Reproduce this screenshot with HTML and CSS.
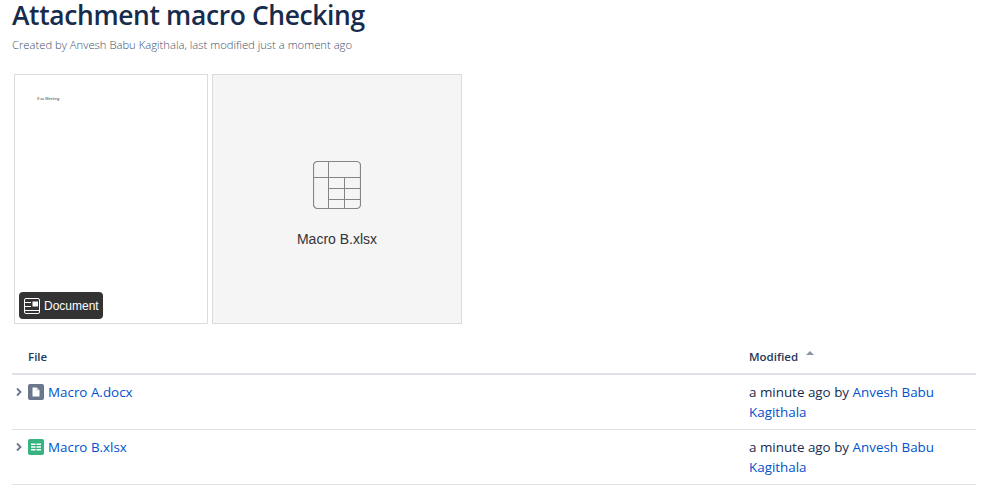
FILE: index.html
```html
<!DOCTYPE html>
<html lang="en">
<head>
    <meta charset="UTF-8">
    <title>Attachment macro Checking</title>
    <link rel="stylesheet" href="styles.css">
</head>
<body>
    <div class="page">
        <h1>Attachment macro Checking</h1>
        <p class="byline">Created by Anvesh Babu Kagithala, last modified just a moment ago</p>

        <div class="cards">
            <div class="card card-doc">
                <span class="doc-line">If so Meeting</span>
                <span class="badge">
                    <svg class="badge-icon" viewBox="0 0 16 16" width="16" height="16" fill="none" stroke="#fff" stroke-width="1">
                        <rect x="0.5" y="0.5" width="15" height="15" rx="1.5"/>
                        <path d="M1 4.5h6M1 8.5h6M1 12.5h14"/>
                        <rect x="9" y="4" width="4.5" height="4" fill="#fff"/>
                    </svg>
                    Document
                </span>
            </div>
            <div class="card card-file">
                <svg class="sheet-icon" viewBox="0 0 48 48" width="48" height="48" fill="none" stroke="#858585" stroke-width="1">
                    <rect x="0.5" y="0.5" width="47" height="47" rx="4" stroke-width="1.2"/>
                    <path d="M0.5 16.5h47M15.5 0.5v47M31.5 16.5v31M15.5 27.5h32M15.5 38.5h32"/>
                </svg>
                <span class="card-name">Macro B.xlsx</span>
            </div>
        </div>

        <table class="files">
            <thead>
                <tr>
                    <th class="col-file">File</th>
                    <th class="col-mod">Modified<span class="sort"></span></th>
                </tr>
            </thead>
            <tbody>
                <tr>
                    <td>
                        <div class="file-cell">
                            <svg class="chev" viewBox="0 0 8 10" width="8" height="10" fill="none" stroke="#6b778c" stroke-width="1.8"><path d="M2 1.5 5.5 5 2 8.5"/></svg>
                            <svg class="type-icon" viewBox="0 0 16 16" width="16" height="16">
                                <rect width="16" height="16" rx="2" fill="#6b778c"/>
                                <path d="M4.5 3.5h4.2l2.8 2.8v6.2h-7z" fill="#fff"/>
                                <path d="M8.5 3.5v3h3" fill="#c1c7d0"/>
                            </svg>
                            <a href="#">Macro A.docx</a>
                        </div>
                    </td>
                    <td>a minute ago by <a href="#">Anvesh Babu Kagithala</a></td>
                </tr>
                <tr>
                    <td>
                        <div class="file-cell">
                            <svg class="chev" viewBox="0 0 8 10" width="8" height="10" fill="none" stroke="#6b778c" stroke-width="1.8"><path d="M2 1.5 5.5 5 2 8.5"/></svg>
                            <svg class="type-icon" viewBox="0 0 16 16" width="16" height="16">
                                <rect width="16" height="16" rx="2" fill="#36b37e"/>
                                <path d="M3 4.5h4.5v1.6H3zM8.5 4.5H13v1.6H8.5zM3 7.2h4.5v1.6H3zM8.5 7.2H13v1.6H8.5zM3 9.9h4.5v1.6H3zM8.5 9.9H13v1.6H8.5z" fill="#fff"/>
                            </svg>
                            <a href="#">Macro B.xlsx</a>
                        </div>
                    </td>
                    <td>a minute ago by <a href="#">Anvesh Babu Kagithala</a></td>
                </tr>
            </tbody>
        </table>
    </div>
</body>
</html>
```

FILE: styles.css
```css
body {
    margin: 0;
    font-family: "Open Sans", "Noto Sans", sans-serif;
    font-size: 13.4px;
    color: #172b4d;
    background: white;
}
a {
    color: #0052cc;
    text-decoration: none;
}
.page {
    padding: 0 20px 0 12px;
}
h1 {
    margin: 0;
    font-size: 26.4px;
    line-height: 31px;
    font-weight: 600;
    letter-spacing: -0.35px;
    color: #172b4d;
}
.byline {
    margin: 6px 0 0 0;
    font-size: 11.25px;
    line-height: 16px;
    font-weight: 300;
    color: #42526e;
}
.cards {
    display: flex;
    gap: 4px;
    margin: 21px 0 0 2px;
}
.card {
    box-sizing: border-box;
    height: 250px;
    border: 1px solid #dcdcdc;
    position: relative;
}
.card-doc {
    width: 194px;
    padding: 22px 0 0 22px;
    background: white;
}
.doc-line {
    display: block;
    font-size: 3.6px;
    line-height: 4px;
    font-weight: 600;
    color: #666;
}
.badge {
    position: absolute;
    left: 4px;
    bottom: 4px;
    display: flex;
    align-items: center;
    gap: 4px;
    height: 27px;
    padding: 0 4px 0 5px;
    border-radius: 4px;
    background: #333;
    color: white;
    font-family: "Liberation Sans", sans-serif;
    font-size: 12px;
}
.card-file {
    width: 250px;
    background: #f5f5f5;
    display: flex;
    flex-direction: column;
    align-items: center;
    padding-top: 86px;
}
.card-name {
    margin-top: 22px;
    font-family: "Liberation Sans", sans-serif;
    font-size: 14px;
    line-height: 17px;
    color: #333;
}
.files {
    width: 100%;
    margin-top: 16px;
    border-collapse: collapse;
}
.files th {
    height: 33px;
    padding: 0;
    text-align: left;
    font-size: 11.5px;
    font-weight: 600;
    color: #253858;
    border-bottom: 2px solid #dfe1e6;
    vertical-align: middle;
}
.col-file {
    padding-left: 16px !important;
}
.col-mod {
    width: 227px;
}
.sort {
    display: inline-block;
    width: 0;
    height: 0;
    margin: 0 0 9px 8px;
    border-left: 4px solid transparent;
    border-right: 4px solid transparent;
    border-bottom: 4px solid #8993a4;
    vertical-align: middle;
}
.files td {
    height: 55px;
    box-sizing: border-box;
    padding: 7px 10px 7px 0;
    vertical-align: top;
    line-height: 20px;
    border-bottom: 1px solid #dfe1e6;
}
.file-cell {
    display: flex;
    align-items: center;
    height: 20px;
}
.chev {
    margin-left: 3px;
    margin-right: 5px;
}
.type-icon {
    margin-right: 4px;
}
```
